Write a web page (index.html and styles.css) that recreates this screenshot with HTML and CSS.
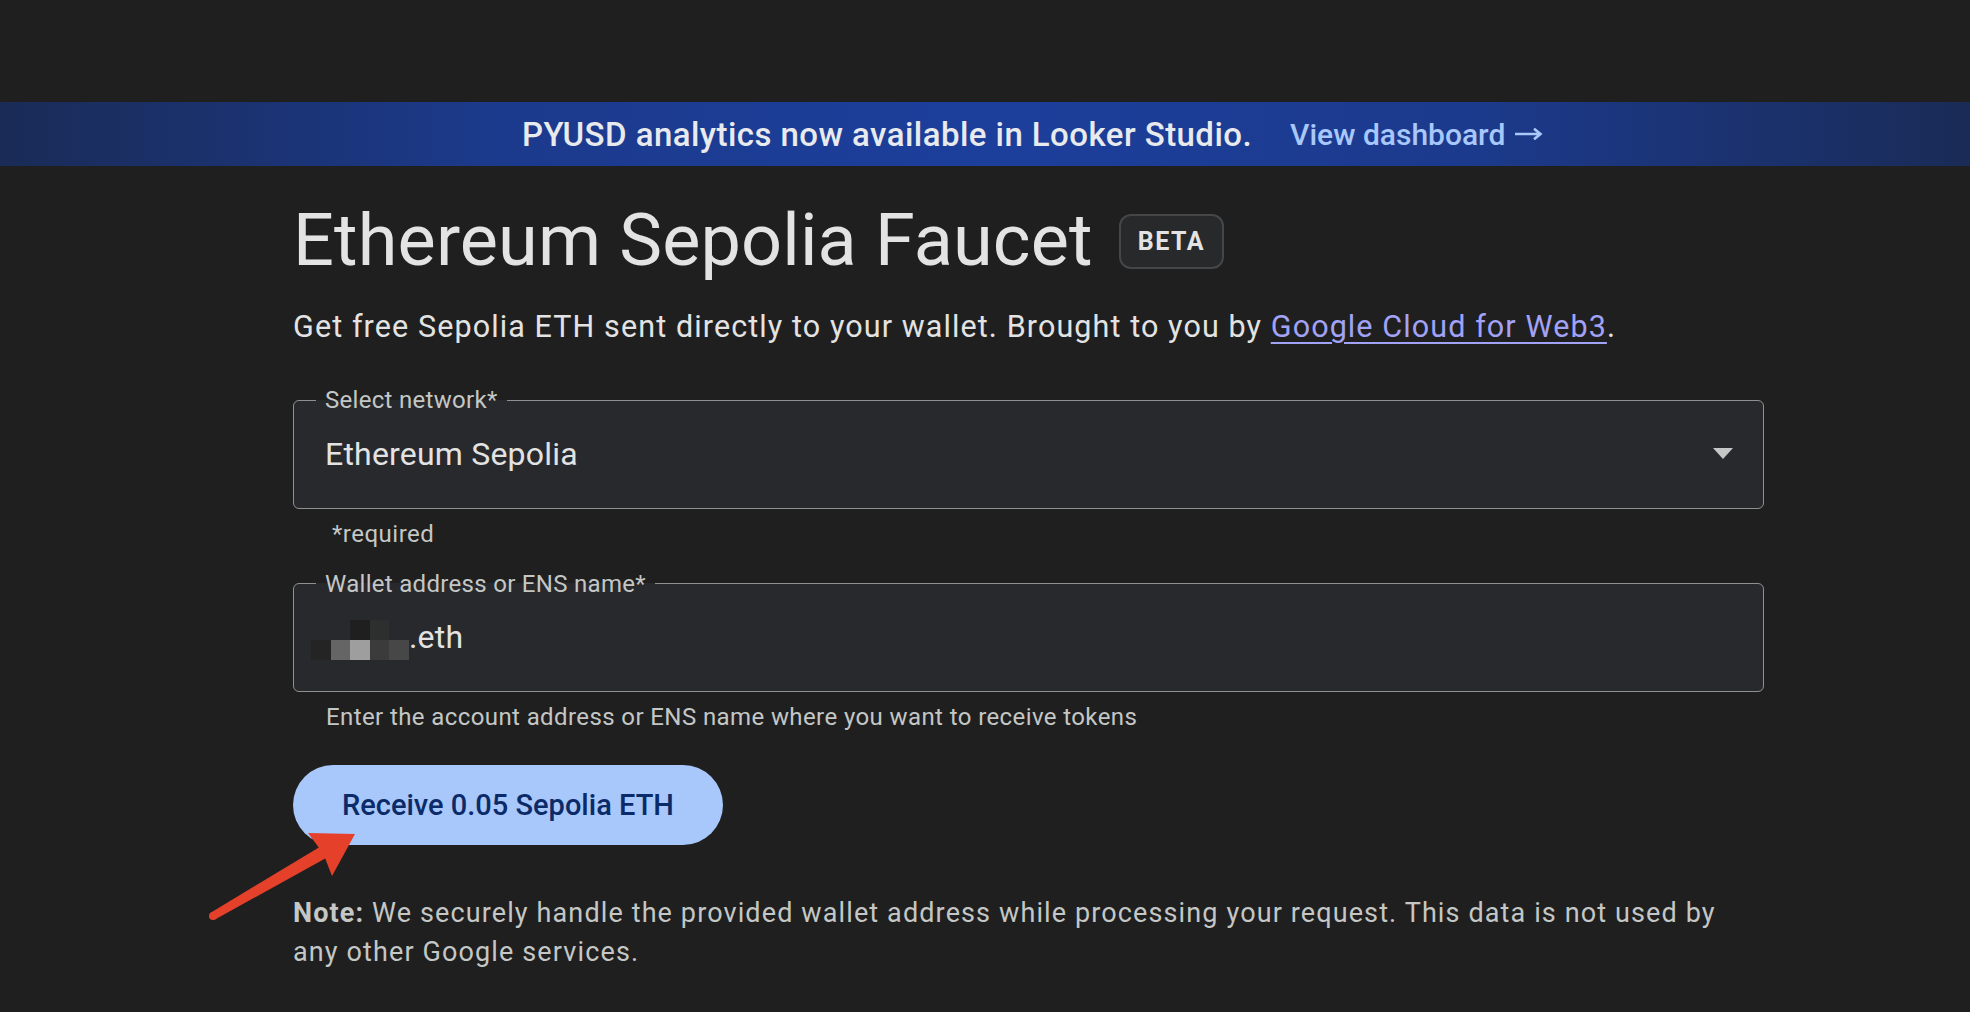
FILE: index.html
```html
<!DOCTYPE html>
<html lang="en">
<head>
<meta charset="utf-8">
<title>Ethereum Sepolia Faucet</title>
<link rel="stylesheet" href="styles.css">
</head>
<body>
<div class="topspace"></div>
<div class="banner">
  <span class="banner-text">PYUSD analytics now available in Looker Studio.</span>
  <a class="banner-link" href="#">View dashboard
    <svg class="banner-arrow" width="28" height="12" viewBox="0 0 28 12"><path d="M0 6H25M20 1.5L25.5 6L20 10.5" fill="none" stroke="#a8c7fa" stroke-width="2.6" stroke-linecap="square"/></svg>
  </a>
</div>
<main class="content">
  <div class="title-row">
    <h1 class="title">Ethereum Sepolia Faucet</h1>
    <span class="badge">BETA</span>
  </div>
  <p class="subtitle">Get free Sepolia ETH sent directly to your wallet. Brought to you by <a class="sub-link" href="#">Google Cloud for Web3</a>.</p>

  <fieldset class="field field-select">
    <legend class="field-label">Select network*</legend>
    <div class="field-row">
      <span class="field-value">Ethereum Sepolia</span>
      <span class="caret"></span>
    </div>
  </fieldset>
  <div class="helper helper-required">*required</div>

  <fieldset class="field field-wallet">
    <legend class="field-label">Wallet address or ENS name*</legend>
    <div class="field-row field-row-wallet">
      <span class="blur">
        <i class="px px-bg"></i><i class="px px-bg"></i><i class="px px-k"></i><i class="px px-g1"></i><i class="px px-bg"></i>
        <i class="px px-d"></i><i class="px px-m"></i><i class="px px-l"></i><i class="px px-g2"></i><i class="px px-g3"></i>
      </span>
      <span class="field-value">.eth</span>
    </div>
  </fieldset>
  <div class="helper">Enter the account address or ENS name where you want to receive tokens</div>

  <button class="receive-btn" type="button">Receive 0.05 Sepolia ETH</button>

  <p class="note"><strong>Note:</strong> We securely handle the provided wallet address while processing your request. This data is not used by any other Google services.</p>
</main>

<svg class="annotation" width="1970" height="1012" viewBox="0 0 1970 1012">
  <polygon fill="#e5402a" points="211,912.5 318.8,847.4 308,833 355,834 332,876 325.2,858.6 215,919.5"/>
  <circle cx="213" cy="916" r="4" fill="#e5402a"/>
</svg>
</body>
</html>
```
FILE: styles.css
```css
* { box-sizing: border-box; }

body {
  margin: 0;
  background: #1f1f1f;
  font-family: Roboto, "Liberation Sans", sans-serif;
  color: #e3e3e3;
  position: relative;
  min-height: 1012px;
}

.topspace { height: 102px; }

.banner {
  height: 64px;
  display: flex;
  align-items: center;
  padding-left: 522px;
  gap: 38px;
  background: linear-gradient(90deg, #1a2b56 0%, #1c3a8c 25%, #1c3f9c 50%, #1c3a8c 75%, #1a2b56 100%);
}

.banner-text {
  font-size: 33px;
  font-weight: 500;
  color: #e8eaed;
  letter-spacing: 0.45px;
}

.banner-link {
  font-size: 30px;
  font-weight: 500;
  color: #a8c7fa;
  text-decoration: none;
  display: flex;
  align-items: center;
  gap: 10px;
}

.content {
  margin-left: 293px;
  width: 1471px;
}

.title-row {
  display: flex;
  align-items: center;
  gap: 26px;
  margin-top: 32px;
}

.title {
  margin: 0;
  font-size: 72px;
  line-height: 86px;
  font-weight: 400;
  letter-spacing: 0.15px;
  color: #e3e3e3;
}

.badge {
  height: 55px;
  display: flex;
  align-items: center;
  padding: 0 17px;
  border: 2px solid #454647;
  border-radius: 12px;
  background: #28292b;
  font-size: 25px;
  font-weight: 700;
  letter-spacing: 1.5px;
  color: #e3e3e3;
}

.subtitle {
  margin: 20px 0 0;
  font-size: 30.5px;
  line-height: 45px;
  letter-spacing: 1.1px;
  color: #e3e3e3;
}

.sub-link {
  color: #a2a2f6;
  text-decoration: underline;
  text-underline-offset: 5px;
  text-decoration-thickness: 2px;
}

.field {
  margin: 37px 0 0;
  padding: 0;
  width: 1471px;
  min-width: 0;
  border: 1.5px solid #8e918f;
  border-radius: 6px;
  background: #28292c;
}

.field-wallet { margin-top: 20px; }

.field-label {
  margin-left: 22px;
  padding: 0 9px;
  font-size: 24px;
  line-height: 28px;
  letter-spacing: 0.3px;
  color: #c4c7c5;
}

.field-row {
  height: 93.5px;
  display: flex;
  align-items: center;
  justify-content: space-between;
  padding: 0 30px 14px 31px;
}

.field-row-wallet {
  justify-content: flex-start;
  padding-left: 17px;
}

.field-value {
  font-size: 32px;
  line-height: 40px;
  letter-spacing: 0.2px;
  color: #e3e3e3;
}

.caret {
  width: 0;
  height: 0;
  border-left: 10px solid transparent;
  border-right: 10px solid transparent;
  border-top: 11px solid #c4c7c5;
}

.blur {
  display: grid;
  grid-template-columns: repeat(5, 19.6px);
  grid-template-rows: 20px 20px;
  margin-top: 6px;
}

.px { display: block; }
.px-bg { background: #28292c; }
.px-k { background: #1f1f1f; }
.px-g1 { background: #2b2f2e; }
.px-d { background: #242424; }
.px-m { background: #656565; }
.px-l { background: #9e9e9e; }
.px-g2 { background: #3b3b3b; }
.px-g3 { background: #474747; }

.helper {
  margin-top: 9px;
  padding-left: 33px;
  font-size: 24px;
  line-height: 32px;
  letter-spacing: 0.4px;
  color: #c4c7c5;
}

.helper-required { padding-left: 39px; letter-spacing: 0.5px; }

.receive-btn {
  display: block;
  margin-top: 32px;
  height: 80px;
  padding: 0 49px;
  border: none;
  border-radius: 40px;
  background: #a8c7fa;
  color: #0b2b68;
  font-family: Roboto, "Liberation Sans", sans-serif;
  font-size: 29px;
  font-weight: 500;
}

.note {
  margin: 49px 0 0;
  width: 1447px;
  font-size: 27px;
  line-height: 39px;
  letter-spacing: 1.12px;
  color: #c4c7c5;
}

.note strong { font-weight: 700; }

.annotation {
  position: absolute;
  left: 0;
  top: 0;
  pointer-events: none;
}
```
